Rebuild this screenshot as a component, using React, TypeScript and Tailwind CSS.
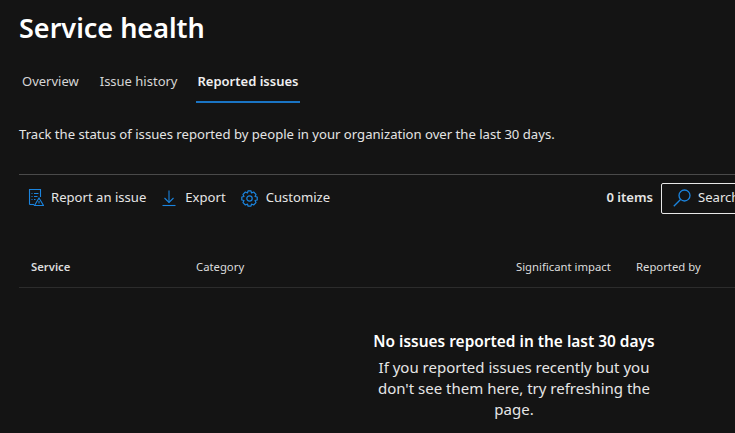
const font = { fontFamily: '"Noto Sans", sans-serif' };

function ReportIcon() {
  return (
    <svg width="16" height="18" viewBox="0 0 16 18" fill="none" stroke="#1b84de" strokeWidth="1.1">
      <path d="M1.5 15.5V0.5H12.5V8" />
      <path d="M1.5 15.5H6" />
      <path d="M3.5 4.5H4.5M6 4.5H10.5M3.5 7.5H4.5M6 7.5H9.5M3.5 10.5H4.5M6 10.5H7.5" />
      <path d="M11 9L6.5 16.5H15.5L11 9Z" />
      <path d="M11 12V14.5" />
    </svg>
  );
}

function ExportIcon() {
  return (
    <svg width="14" height="17" viewBox="0 0 14 17" fill="none" stroke="#1b84de" strokeWidth="1.1">
      <path d="M7 0.5V12.5" />
      <path d="M2.5 8L7 12.5L11.5 8" />
      <path d="M0.5 15.5H13.5" />
    </svg>
  );
}

function GearIcon() {
  return (
    <svg width="17" height="17" viewBox="0 0 17 17" fill="none" stroke="#1b84de" strokeWidth="1.2">
      <circle cx="8.5" cy="8.5" r="2.7" />
      <path d="M7 0.8H10L10.5 3L12.6 2L15 4.4L14 6.5L16.2 7V10L14 10.5L15 12.6L12.6 15L10.5 14L10 16.2H7L6.5 14L4.4 15L2 12.6L3 10.5L0.8 10V7L3 6.5L2 4.4L4.4 2L6.5 3L7 0.8Z" strokeLinejoin="round" />
    </svg>
  );
}

function SearchIcon() {
  return (
    <svg width="18" height="18" viewBox="0 0 18 18" fill="none" stroke="#1b84de" strokeWidth="1.3">
      <circle cx="11.5" cy="6.5" r="5.5" />
      <path d="M7.5 10.5L0.8 17.2" />
    </svg>
  );
}

export default function App() {
  return (
    <div className="w-[735px] h-[433px] overflow-hidden bg-[#141414] text-white" style={font}>
      <h1 className="pl-[19px] pt-[10px] text-[27px] leading-[36px] font-semibold">Service health</h1>
      <div className="flex pl-[19px] mt-[16px] h-[41px] text-[13px] leading-[38px]">
        <div className="px-[3px] mr-[15px] text-[#d6d6d6]">Overview</div>
        <div className="px-[3px] mr-[15px] text-[#d6d6d6]">Issue history</div>
        <div className="px-[2px] font-semibold text-[#f0f0f0] border-b-2 border-[#1a74c4]">Reported issues</div>
      </div>
      <p className="pl-[19px] mt-[22px] text-[13.12px] leading-[18px] text-[#e4e4e4]">Track the status of issues reported by people in your organization over the last 30 days.</p>
      <div className="ml-[19px] mt-[31px] h-[1px] bg-[#4a4a4a]" />
      <div className="flex items-center pl-[28px] h-[46px] text-[13.1px] text-[#e6e6e6]">
        <ReportIcon />
        <span className="ml-[7px]">Report an issue</span>
        <span className="ml-[16px] flex"><ExportIcon /></span>
        <span className="ml-[9px]">Export</span>
        <span className="ml-[15px] flex"><GearIcon /></span>
        <span className="ml-[8px]">Customize</span>
        <span className="ml-auto font-semibold">0 items</span>
        <div className="ml-[8px] w-[90px] -mr-[16px] h-[31px] shrink-0 border border-[#e8e8e8] rounded-[2px] flex items-center pl-[11px]">
          <SearchIcon />
          <span className="ml-[7px]">Search</span>
        </div>
      </div>
      <div className="flex items-center ml-[19px] mt-[24px] pt-[2px] h-[43px] border-b border-[#2c2c2c] text-[11.3px] text-[#dcdcdc]">
        <span className="w-[177px] pl-[12px] font-semibold">Service</span>
        <span className="w-[320px]">Category</span>
        <span className="w-[120px]">Significant impact</span>
        <span>Reported by</span>
      </div>
      <div className="flex flex-col items-center w-[300px] ml-[364px] mt-[42px] text-center">
        <div className="text-[15.45px] leading-[22px] font-semibold whitespace-nowrap">No issues reported in the last 30 days</div>
        <p className="mt-[5px] text-[15px] leading-[21px] text-[#e6e6e6]">If you reported issues recently but you don't see them here, try refreshing the page.</p>
      </div>
    </div>
  );
}
